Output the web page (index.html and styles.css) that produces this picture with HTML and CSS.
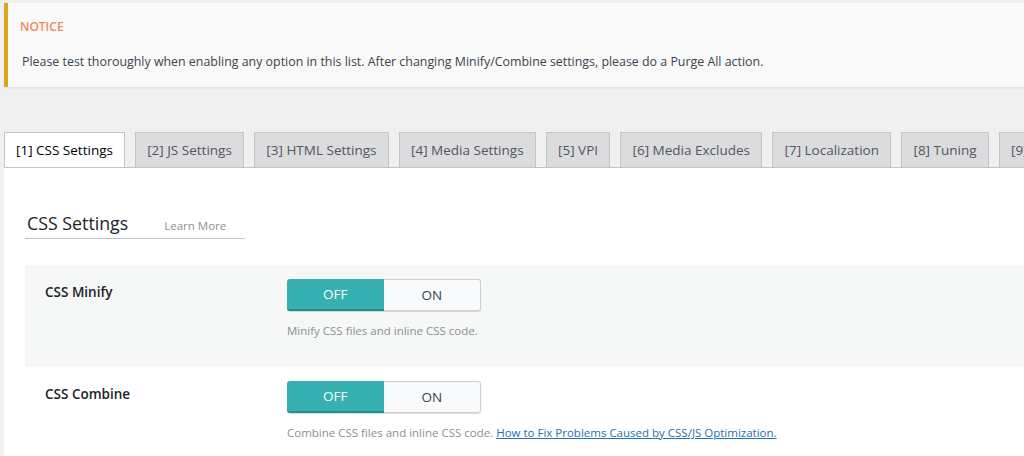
FILE: index.html
```html
<!DOCTYPE html>
<html lang="en">
<head>
    <meta charset="UTF-8">
    <title>Page Optimization</title>
    <link rel="stylesheet" href="styles.css">
</head>
<body>
    <div class="notice">
        <div class="notice-title">NOTICE</div>
        <p>Please test thoroughly when enabling any option in this list. After changing Minify/Combine settings, please do a Purge All action.</p>
    </div>

    <div class="tabs">
        <a class="tab active">[1] CSS Settings</a>
        <a class="tab">[2] JS Settings</a>
        <a class="tab">[3] HTML Settings</a>
        <a class="tab">[4] Media Settings</a>
        <a class="tab">[5] VPI</a>
        <a class="tab">[6] Media Excludes</a>
        <a class="tab">[7] Localization</a>
        <a class="tab">[8] Tuning</a>
        <a class="tab">[9] Tuning - CSS</a>
    </div>

    <div class="panel">
        <div class="section-title">
            <h3>CSS Settings</h3>
            <a class="learn-more">Learn More</a>
        </div>

        <div class="setting shaded">
            <div class="setting-label">CSS Minify</div>
            <div class="setting-field">
                <div class="switch">
                    <span class="switch-off">OFF</span>
                    <span class="switch-on">ON</span>
                </div>
                <div class="desc">Minify CSS files and inline CSS code.</div>
            </div>
        </div>

        <div class="setting">
            <div class="setting-label">CSS Combine</div>
            <div class="setting-field">
                <div class="switch">
                    <span class="switch-off">OFF</span>
                    <span class="switch-on">ON</span>
                </div>
                <div class="desc">Combine CSS files and inline CSS code. <a href="#">How to Fix Problems Caused by CSS/JS Optimization.</a></div>
            </div>
        </div>
    </div>
</body>
</html>
```

FILE: styles.css
```css
html, body {
    height: 456px;
    overflow: hidden;
}
body {
    margin: 0;
    padding: 3px 0 0 4px;
    background-color: #f0f0f1;
    font-family: "Open Sans", sans-serif;
    color: #3c434a;
}
.notice {
    background-color: #f9f9f9;
    border-left: 4px solid #dba617;
    box-shadow: 0 1px 2px rgba(0, 0, 0, 0.08);
    padding: 14px 12px 16px 12px;
    height: 54px;
}
.notice-title {
    color: #ea8c5a;
    font-size: 12px;
    font-weight: 600;
    line-height: 20px;
}
.notice p {
    margin: 15px 0 0 2px;
    font-size: 12.4px;
    line-height: 20px;
}
.tabs {
    display: flex;
    gap: 10px;
    margin-top: 45px;
    border-bottom: 1px solid #c3c4c7;
    overflow: hidden;
}
.tab {
    display: block;
    flex-shrink: 0;
    padding: 0 11.25px;
    height: 34px;
    line-height: 34px;
    font-size: 13.5px;
    color: #50575e;
    background-color: #dcdcde;
    border: 1px solid #c3c4c7;
    border-bottom: none;
    white-space: nowrap;
}
.tab.active {
    padding: 0 11px;
    background-color: #fff;
    color: #000;
    margin-bottom: -1px;
    height: 35px;
}
.panel {
    background-color: #fff;
    padding: 42px 0 40px 21px;
}
.section-title {
    display: flex;
    align-items: baseline;
    width: 220px;
    border-bottom: 1px solid #c3c4c7;
    padding-bottom: 2px;
}
.section-title h3 {
    margin: 0 0 0 2px;
    font-size: 17.8px;
    font-weight: 500;
    color: #1d2327;
    line-height: 26px;
}
.learn-more {
    margin-left: 36px;
    font-size: 11.5px;
    color: #8c8f94;
}
.setting {
    display: flex;
    padding: 14px 0 0 20px;
    height: 87px;
}
.setting.shaded {
    background-color: #f6f7f7;
    margin-top: 26px;
    height: 88px;
}
.setting-label {
    width: 242px;
    font-size: 13.5px;
    font-weight: 600;
    color: #1d2327;
    padding-top: 4px;
}
.switch {
    display: flex;
    width: 194px;
    height: 32px;
    border-radius: 3px;
    box-shadow: 0 1px 1px rgba(0, 0, 0, 0.15);
    font-size: 13.5px;
}
.switch span {
    display: flex;
    align-items: center;
    justify-content: center;
    flex: 1;
}
.switch-off {
    background-color: #36b0b0;
    color: #fff;
    border-radius: 3px 0 0 3px;
    border-bottom: 2px solid #1e9090;
}
.switch-on {
    background-color: #f9fafb;
    color: #3c434a;
    border: 1px solid #d0d0d0;
    border-left: none;
    border-radius: 0 3px 3px 0;
}
.desc {
    margin-top: 11px;
    font-size: 11.5px;
    color: #8c8f94;
    line-height: 18px;
}
.desc a {
    color: #2271b1;
}
```
